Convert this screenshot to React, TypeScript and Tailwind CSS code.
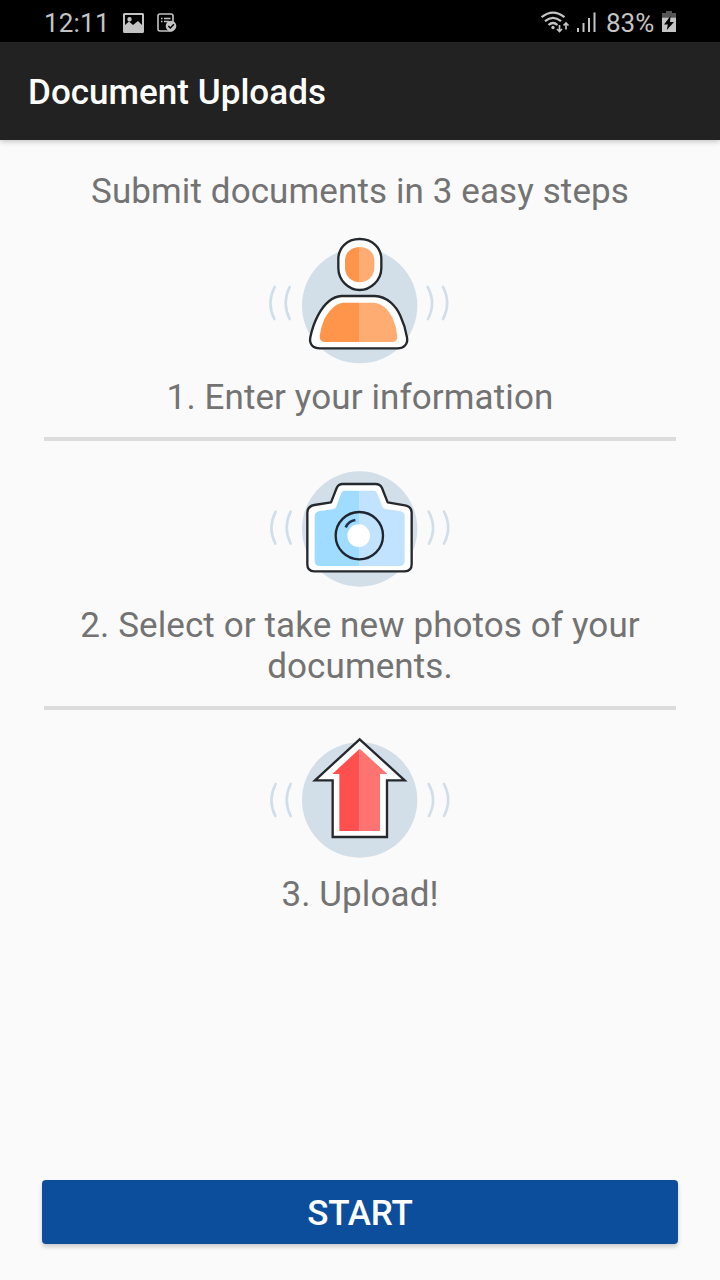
import type { ReactNode } from 'react';

function StatusBar() {
  return (
    <div className="flex h-[42px] items-center justify-between bg-black pl-11 pr-11 text-[#c4c4c4]">
      <div className="flex items-center">
        <span className="w-[79px] pt-[3px] text-[26px] leading-[30px] tracking-[0.2px]">12:11</span>
        <svg className="mt-[4px]" width="54" height="21" viewBox="0 0 54 21">
          <path
            fill="currentColor"
            fillRule="evenodd"
            d="M1.5 0h18Q21 0 21 1.5v17q0 1.500-1.500 1.500h-18Q0 20 0 18.500v-17Q0 0 1.500 0zM2 2v10l4-3.500 4 3.500 5-4 4 4V2zM6.500 4a2.200 2.200 0 1 1 0 4.400a2.200 2.200 0 0 1 0-4.400z"
          />
          <rect x="35" y="1" width="15" height="17" rx="2" fill="none" stroke="currentColor" strokeWidth="1.600" />
          <path
            d="M38 5.500h1.500M41 5.500h6.500M38 8.500h1.500M41 8.500h5"
            stroke="currentColor"
            strokeWidth="1.300"
          />
          <circle cx="48" cy="13" r="5.300" fill="currentColor" />
          <path d="M45.300 13l2 2 3.600-3.800" fill="none" stroke="#000" strokeWidth="1.500" />
        </svg>
      </div>

      <div className="flex items-center">
        {/* Wi-Fi with traffic arrows, then signal bars */}
        <svg className="mt-[3px]" width="65" height="24" viewBox="0 0 65 24">
          <g fill="none" stroke="currentColor" strokeWidth="2.200">
            <path d="M0.500 6.200Q12-3 23.500 6.200" />
            <path d="M4 10.200Q12 3.500 20 10.200" />
            <path d="M7.500 14Q12 10 16.500 14" />
            <path d="M18.500 14v6.500M16 18l2.500 2.500 2.500-2.500" strokeWidth="1.700" />
            <path d="M25 18.500v-6.500M22.500 14.500l2.500-2.500 2.500 2.500" strokeWidth="1.700" />
          </g>
          <circle cx="12" cy="16.500" r="1.700" fill="currentColor" />
          <path fill="currentColor" d="M36 17h2v4h-2zM41.500 12h2v9h-2zM47 7h2v14h-2zM52.500 1.500h2V21h-2z" />
        </svg>
        <span className="w-[56px] pt-[3px] text-[26px] leading-[30px]">83%</span>
        <svg className="mt-[2px]" width="14" height="22" viewBox="0 0 14 22">
          <path fill="#555" d="M4 0h6v2h4v4.500H0V2h4z" />
          <path fill="currentColor" d="M0 6.500h14v14.500H0z" />
          <path fill="#000" d="M8.500 5L2 13.500h3.800L4.800 19 12 11H8z" />
        </svg>
      </div>
    </div>
  );
}

interface BadgeProps {
  cy: number;
  waveY: number;
  waveX?: number;
  children: ReactNode;
}

// Pale disc with ripple marks on both sides, shared by every step
function Badge({ cy, waveY, waveX = 0, children }: BadgeProps) {
  return (
    <svg width="200" height="140" viewBox="0 0 600 420" className="block">
      <circle cx="299" cy={cy} r="173" fill="#d2dfe8" />
      <g transform={`translate(${waveX} ${waveY})`} fill="none" stroke="#cfdfe9" strokeWidth="8" strokeLinecap="round">
        <path d="M47-48Q22 0 46 48" />
        <path d="M92-48Q68 0 92 48" />
        <path d="M506-48Q532 0 507 48" />
        <path d="M552-48Q577 0 552 48" />
      </g>
      {children}
    </svg>
  );
}

function PersonIcon() {
  return (
    <Badge cy={227} waveY={219} waveX={-3}>
      <g fill="#fff" stroke="#25282c" strokeWidth="7" strokeLinejoin="round">
        <path d="M299 27C337 27 364 53 364 88V114C364 151 332 180 299 180S235 151 235 114V88C235 53 261 27 299 27Z" />
        <path d="M245 198H344C382 199 408 229 421 257Q435 287 441 322C445 343 431 355 412 355H180C159 355 147 343 151 322Q158 286 174 256C190 226 215 200 245 198Z" />
      </g>
      <path fill="#ff954a" d="M299 51C273 51 255 69 255 92V115C255 138 275 157 299 157Z" />
      <path fill="#ffac72" d="M299 51C325 51 343 69 343 92V115C343 138 323 157 299 157Z" />
      <path fill="#ff954a" d="M299 218H250C226 220 205 243 193 268Q182 292 179 317Q178 336 197 336H299Z" />
      <path fill="#ffac72" d="M299 218H340C370 220 389 244 399 267Q410 293 412 317Q413 336 395 336H299Z" />
    </Badge>
  );
}

function CameraIcon() {
  return (
    <Badge cy={207} waveY={203}>
      <path
        d="M248 72H346Q361 72 366 84L383 127L435 136Q455 140 455 158V313Q455 334 434 334H163Q142 334 142 313V158Q142 139 163 135L213 127L230 84Q235 72 248 72Z"
        fill="#fff"
        stroke="#25282c"
        strokeWidth="7"
        strokeLinejoin="round"
      />
      <path fill="#9fdcff" d="M299 92H254Q247 92 244 99L228 142Q226 146 221 147L180 153Q164 155 164 169V302Q164 318 180 318H299Z" />
      <path fill="#c1e3ff" d="M299 92H341Q348 92 351 99L368 142Q370 146 376 147L419 153Q434 155 434 169V302Q434 318 418 318H299Z" />
      <circle cx="298" cy="227" r="71" fill="none" stroke="#20252d" strokeWidth="7" />
      <circle cx="296" cy="227" r="34" fill="#fff" />
      <path d="M257 202Q266 183 286 180" fill="none" stroke="#20304c" strokeWidth="8" />
    </Badge>
  );
}

function ArrowIcon() {
  return (
    <Badge cy={210} waveY={210}>
      <path d="M299 28L434 151H381V321H218V151H165Z" fill="#fff" stroke="#25282c" strokeWidth="7" />
      <path fill="#ff504e" d="M299 56V303H238V132H217Z" />
      <path fill="#ff7470" d="M299 56L382 132H360V303H299Z" />
    </Badge>
  );
}

interface StepProps {
  icon: ReactNode;
  label: string;
  className?: string;
}

function Step({ icon, label, className }: StepProps) {
  return (
    <li className={`flex flex-col items-center ${className ?? ''}`}>
      {icon}
      <p className="w-[600px] text-center">{label}</p>
    </li>
  );
}

export default function App() {
  return (
    <div className="flex h-[1280px] w-[720px] flex-col bg-[#fafafa] font-['Roboto',sans-serif]">
      <StatusBar />
      <header className="flex h-[98px] items-center bg-[#222] px-7 pt-0.5 shadow-[0_2px_5px_rgba(0,0,0,0.2)]">
        <h1 className="text-[35px] font-medium leading-[41px] tracking-[0.03px] text-white">Document Uploads</h1>
      </header>

      <main className="flex flex-1 flex-col px-[42px] pb-9 pt-[31px]">
        <div className="flex-1 text-[35px] leading-[41px] tracking-[0.1px] text-[#737373]">
          <h2 className="text-center">Submit documents in 3 easy steps</h2>
          <ol>
            <Step
              icon={<PersonIcon />}
              label="1. Enter your information"
              className="gap-[7px] pb-[19px] pt-[18px]"
            />
            <li className="mx-0.5 h-1 bg-[#dcdcdc]" />
            <Step
              icon={<CameraIcon />}
              label="2. Select or take new photos of your documents."
              className="gap-[5px] pb-[19px] pt-[19px]"
            />
            <li className="mx-0.5 h-1 bg-[#dcdcdc]" />
            <Step icon={<ArrowIcon />} label="3. Upload!" className="gap-1 pt-5" />
          </ol>
        </div>
        <button className="h-16 rounded bg-[#0d4e9c] pt-0.5 text-[35px] font-medium leading-[41px] tracking-[-0.2px] text-white shadow-[0_3px_4px_rgba(0,0,0,0.18)]">
          START
        </button>
      </main>
    </div>
  );
}
